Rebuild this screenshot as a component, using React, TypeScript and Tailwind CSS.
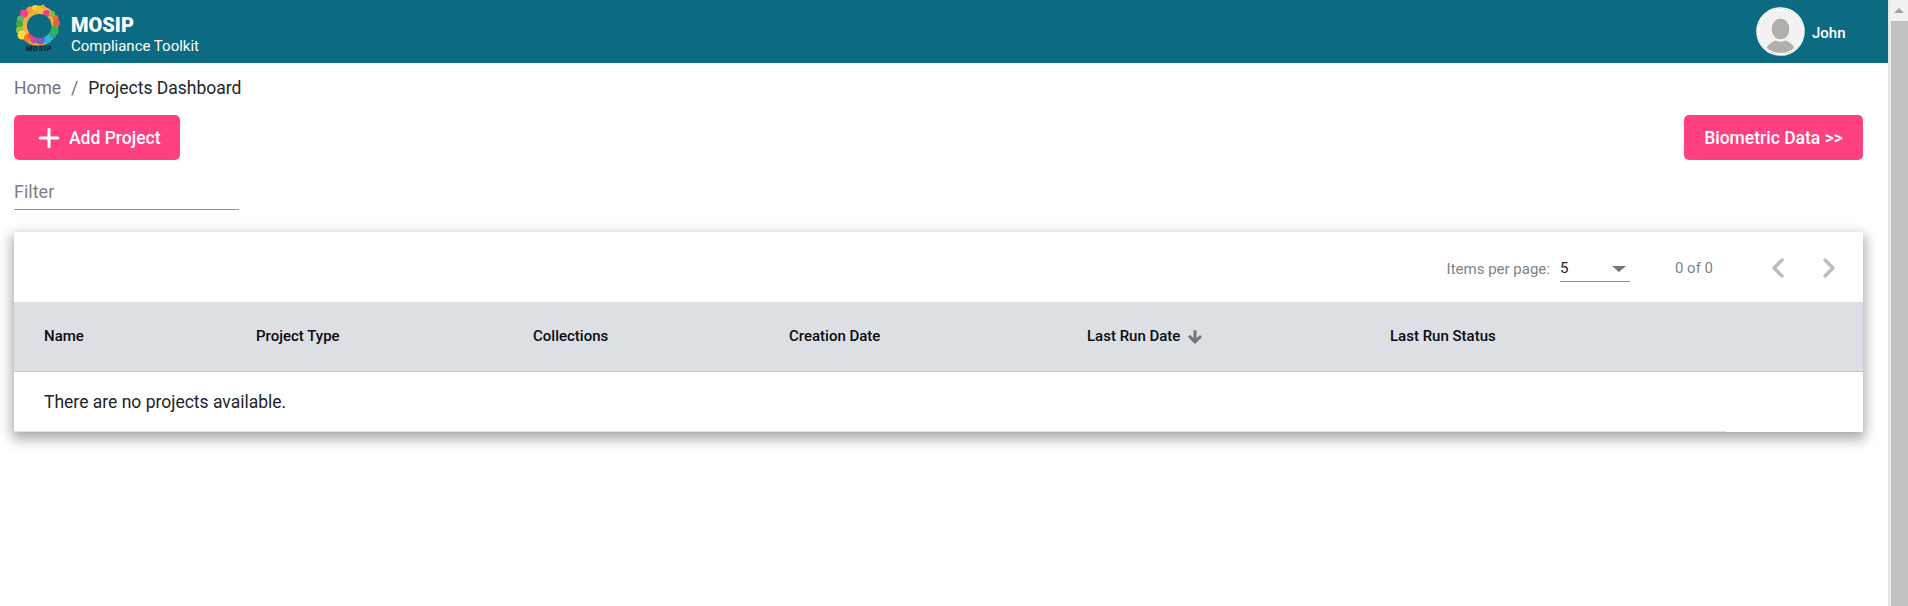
import React from 'react';
import { ChevronLeft, ChevronRight, Plus } from 'lucide-react';

const columns = ['Name', 'Project Type', 'Collections', 'Creation Date', 'Last Run Date', 'Last Run Status'];

const dots = [
  { cx: 14, cy: 6, r: 3.5, fill: '#f39c3d' },
  { cx: 19, cy: 4, r: 3, fill: '#f7d23e' },
  { cx: 24, cy: 6, r: 3.5, fill: '#f5c02c' },
  { cx: 27, cy: 2.5, r: 2, fill: '#f4a23a' },
  { cx: 30.5, cy: 9.5, r: 3.5, fill: '#ec3f8c' },
  { cx: 36, cy: 10, r: 3, fill: '#7fbf3f' },
  { cx: 8, cy: 9.5, r: 4, fill: '#e8478f' },
  { cx: 39.5, cy: 14, r: 3, fill: '#ef6c3a' },
  { cx: 4.5, cy: 15, r: 3.5, fill: '#5cb85c' },
  { cx: 3.5, cy: 20, r: 3.5, fill: '#3fa94a' },
  { cx: 40.5, cy: 19, r: 3.5, fill: '#ee5a45' },
  { cx: 3.5, cy: 26, r: 3.5, fill: '#8cc63f' },
  { cx: 37, cy: 27, r: 5.5, fill: '#31b44b' },
  { cx: 6, cy: 31, r: 4.5, fill: '#f7dc3a' },
  { cx: 12, cy: 34, r: 4, fill: '#f47b2a' },
  { cx: 15, cy: 31, r: 3, fill: '#ea3f6f' },
  { cx: 31, cy: 35, r: 4.5, fill: '#25b9e0' },
  { cx: 18, cy: 36, r: 3.5, fill: '#d6479b' },
  { cx: 24.5, cy: 36, r: 4.5, fill: '#7a5fb5' },
  { cx: 37, cy: 32, r: 2.5, fill: '#1f9fd8' },
];

// logo is a ring of coloured dots with the wordmark under it
function Logo() {
  return (
    <svg width="46" height="50" viewBox="0 0 46 50" className="mb-[5px] shrink-0">
      <circle cx="22" cy="21.5" r="15.5" fill="none" stroke="#f3b03f" strokeWidth="9" />
      {dots.map((d, i) => (
        <circle key={i} cx={d.cx} cy={d.cy} r={d.r} fill={d.fill} />
      ))}
      <circle cx="23.5" cy="22" r="12" fill="#0c6a83" />
      <text x="23" y="47" textAnchor="middle" fontSize="7.5" fontWeight="900" fill="#10222b" fontFamily="Roboto, sans-serif" letterSpacing="0.6">
        MOSIP
      </text>
    </svg>
  );
}

function Avatar() {
  return (
    <svg width="49" height="49" viewBox="0 0 49 49" className="shrink-0">
      <defs>
        <clipPath id="avatar-clip">
          <circle cx="24.5" cy="24.5" r="21.5" />
        </clipPath>
      </defs>
      <circle cx="24.5" cy="24.5" r="23.5" fill="none" stroke="#ffffff" strokeWidth="1.5" />
      <circle cx="24.5" cy="24.5" r="22" fill="#f1f1f1" stroke="#ffffff" strokeWidth="1.5" />
      <g clipPath="url(#avatar-clip)">
        <path d="M9 46 C11 37 15 36 19 33.5 C22 35 27 35 30 33.5 C34 36 38 37 40 46 Z" fill="#b1afac" />
        <ellipse cx="24.5" cy="22" rx="9.5" ry="11" fill="#b1afac" stroke="#ffffff" strokeWidth="1" />
      </g>
    </svg>
  );
}

export default function App() {
  return (
    <div className="flex h-[606px] w-full overflow-hidden bg-white font-['Roboto',sans-serif]">
      <div className="min-w-0 flex-1">
        {/* --- Header --- */}
        <header className="flex h-[63px] items-center justify-between bg-[#0c6a83] pl-[16px] pr-[40px] text-white">
          <div className="flex items-center gap-[9px]">
            <Logo />
            <div className="flex flex-col pt-[4px]">
              <span className="text-[20px] leading-[24px] font-black">MOSIP</span>
              <span className="text-[15px] leading-[18px]">Compliance Toolkit</span>
            </div>
          </div>
          <div className="flex w-[92px] items-center gap-[7px]">
            <Avatar />
            <span className="pt-[4px] text-[15px] font-medium">John</span>
          </div>
        </header>

        <main className="pr-[25px] pl-[14px]">
          {/* --- Breadcrumb --- */}
          <div className="flex h-[50px] items-center text-[17.5px] leading-[24px]">
            <span className="text-[#6b7280]">Home</span>
            <span className="mx-[10px] text-[#6b7280]">/</span>
            <span className="text-[#212529]">Projects Dashboard</span>
          </div>

          <div className="mt-[2px] flex items-center justify-between">
            <button className="flex h-[45px] w-[166px] items-center rounded-[5px] bg-[#ff4081] pl-[20px] text-[17.5px] font-medium text-white">
              <Plus size={30} strokeWidth={2.4} className="mr-[5px]" />
              <span className="pt-[1px]">Add Project</span>
            </button>
            <button className="h-[45px] w-[179px] rounded-[5px] bg-[#ff4081] pt-[1px] text-[17.5px] font-medium text-white">
              Biometric Data &gt;&gt;
            </button>
          </div>

          <div className="mt-[19px] h-[31px] w-[225px] border-b border-[#949494] text-[18px] leading-[26px] text-[#7b7f85]">
            Filter
          </div>

          {/* --- Table card --- */}
          <div className="mt-[22px] bg-white shadow-[0_5px_12px_2px_rgba(0,0,0,0.35)]">
            <div className="flex h-[70px] items-start text-[15px] text-[#7d8287]">
              <div className="ml-auto flex items-start">
                <span className="mt-[26px]">Items per page:</span>
                <div className="mt-[24px] ml-[10px] flex h-[26px] w-[70px] items-center justify-between border-b border-[#8f8f8f] pr-[4px] text-[#212121]">
                  <span>5</span>
                  <span className="h-0 w-0 border-x-[7px] border-t-[6px] border-x-transparent border-t-[#757575]" />
                </div>
                <span className="mt-[25px] ml-[45px]">0 of 0</span>
                <ChevronLeft size={32} strokeWidth={2.6} className="mt-[20px] ml-[49px] text-[#bdbdbd]" />
                <ChevronRight size={32} strokeWidth={2.6} className="mt-[20px] ml-[19px] mr-[18px] text-[#bdbdbd]" />
              </div>
            </div>
            <div className="grid h-[70px] grid-cols-[212px_277px_256px_298px_303px_1fr] items-center border-b border-[#c3c6cc] bg-[#dcdfe4] pl-[30px] text-[15px] font-medium text-[#0b0b12]">
              {columns.map((col) => (
                <div key={col} className="flex items-center">
                  {col}
                  {col === 'Last Run Date' && (
                    <svg width="18" height="18" viewBox="0 0 24 24" className="mt-[1px] ml-[6px]" fill="#757575" stroke="#757575" strokeWidth="2">
                      <path d="M20 12l-1.41-1.41L13 16.17V4h-2v12.17l-5.58-5.59L4 12l8 8 8-8z" />
                    </svg>
                  )}
                </div>
              ))}
            </div>
            <div className="flex h-[60px] w-[1712px] items-center border-b border-[#e0e0e0] pt-[1px] pl-[30px] text-[17.5px] text-[#212529]">
              There are no projects available.
            </div>
          </div>
        </main>
      </div>

      {/* --- Scrollbar --- */}
      <div className="flex w-[20px] shrink-0 flex-col items-center border-l-2 border-[#e8e8e8] bg-[#f1f1f1]">
        <div className="flex h-[21px] items-center justify-center">
          <span className="h-0 w-0 border-x-[5px] border-b-[5px] border-x-transparent border-b-[#a3a3a3]" />
        </div>
        <div className="w-[17px] flex-1 bg-[#c1c1c1]" />
      </div>
    </div>
  );
}
